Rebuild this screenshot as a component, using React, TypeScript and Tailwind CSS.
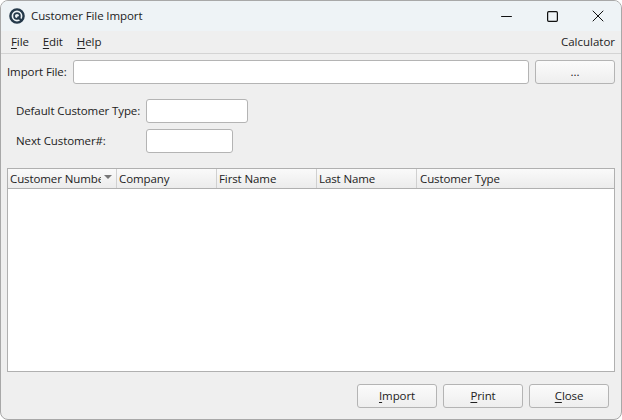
import { Minus, Square, X } from "lucide-react";

const font = { fontFamily: '"Open Sans", "Noto Sans", sans-serif' };

function Mnemonic({ first, rest }: { first: string; rest: string }) {
  return (
    <span>
      <span className="underline underline-offset-2">{first}</span>
      {rest}
    </span>
  );
}

function ActionButton({ first, rest, width }: { first: string; rest: string; width: string }) {
  return (
    <button
      className={`h-6 ${width} rounded-[3px] border border-[#b4b4b4] bg-gradient-to-b from-[#fbfbfb] to-[#eeeeee] text-center text-[11.5px] leading-[22px] text-[#222]`}
    >
      <Mnemonic first={first} rest={rest} />
    </button>
  );
}

function Logo() {
  return (
    <svg width="16" height="16" viewBox="0 0 16 16" fill="none">
      <circle cx="8" cy="8" r="6.6" stroke="#25394a" strokeWidth="2.4" />
      <circle cx="8" cy="8" r="2.9" stroke="#25394a" strokeWidth="1.7" />
      <path d="M8.6 8.6 L12.6 12.8" stroke="#25394a" strokeWidth="2" />
    </svg>
  );
}

const columns = [
  { label: "Customer Number", width: "w-[109px]", sort: true },
  { label: "Company", width: "w-[100px]" },
  { label: "First Name", width: "w-[100px]" },
  { label: "Last Name", width: "w-[100px]" },
  { label: "Customer Type", width: "flex-1" },
];

export default function App() {
  return (
    <div
      style={font}
      className="flex h-[420px] w-[622px] flex-col overflow-hidden rounded-lg border border-[#a8a8a8] bg-[#efefef] text-[11.5px] tracking-[-0.1px] text-[#222]"
    >
      <div className="flex h-[30px] shrink-0 items-center bg-[#eef3f6] pl-[8px]">
        <Logo />
        <span className="ml-[6px] flex-1 text-[#222]">Customer File Import</span>
        <div className="flex items-center">
          <div className="flex w-[46px] justify-center">
            <Minus size={17} strokeWidth={1} color="#111" absoluteStrokeWidth />
          </div>
          <div className="flex w-[46px] justify-center">
            <Square size={13} strokeWidth={1.2} color="#111" absoluteStrokeWidth />
          </div>
          <div className="flex w-[46px] justify-center">
            <X size={20} strokeWidth={1} color="#111" absoluteStrokeWidth />
          </div>
        </div>
      </div>

      <div className="flex h-[23px] shrink-0 items-center border-b border-[#d4d4d4] pl-[10px] pr-[6px]">
        <div className="flex flex-1 gap-[14px]">
          <Mnemonic first="F" rest="ile" />
          <Mnemonic first="E" rest="dit" />
          <Mnemonic first="H" rest="elp" />
        </div>
        <span className="tracking-normal">Calculator</span>
      </div>

      <div className="mt-[6px] flex h-6 shrink-0 items-center pl-[6px] pr-[6px]">
        <span className="w-[66px] whitespace-nowrap">Import File:</span>
        <div className="h-6 w-[456px] rounded-[3px] border border-[#b4b4b4] bg-white" />
        <button className="ml-[6px] h-6 w-[80px] rounded-[3px] border border-[#b4b4b4] bg-gradient-to-b from-[#fbfbfb] to-[#eeeeee] text-[11.5px]">
          ...
        </button>
      </div>

      <div className="mt-[15px] flex h-6 shrink-0 items-center pl-[15px]">
        <span className="w-[130px] whitespace-nowrap">Default Customer Type:</span>
        <div className="h-6 w-[102px] rounded-[3px] border border-[#b4b4b4] bg-white" />
      </div>

      <div className="mt-[6px] flex h-6 shrink-0 items-center pl-[15px]">
        <span className="w-[130px] whitespace-nowrap">Next Customer#:</span>
        <div className="h-6 w-[87px] rounded-[3px] border border-[#b4b4b4] bg-white" />
      </div>

      <div className="mx-[6px] mt-[15px] flex h-[204px] shrink-0 flex-col border border-[#b0b0b0] bg-white">
        <div className="flex h-5 shrink-0 border-b border-[#b0b0b0] bg-gradient-to-b from-[#fafafa] to-[#ececec]">
          {columns.map((c) => (
            <div
              key={c.label}
              className={`${c.width} flex items-center overflow-hidden border-r border-[#d0d0d0] pl-[2px] last:border-r-0 last:pl-[3px]`}
            >
              <span className={c.sort ? "w-[91px] overflow-hidden whitespace-nowrap" : "whitespace-nowrap"}>
                {c.label}
              </span>
              {c.sort && (
                <span className="ml-[3px] mb-[4px] h-0 w-0 border-x-[4px] border-t-[4px] border-x-transparent border-t-[#777]" />
              )}
            </div>
          ))}
        </div>
      </div>

      <div className="mt-[12px] flex shrink-0 justify-end gap-[6px] pr-[12px]">
        <ActionButton first="I" rest="mport" width="w-[80px]" />
        <ActionButton first="P" rest="rint" width="w-[80px]" />
        <ActionButton first="C" rest="lose" width="w-[80px]" />
      </div>
    </div>
  );
}
